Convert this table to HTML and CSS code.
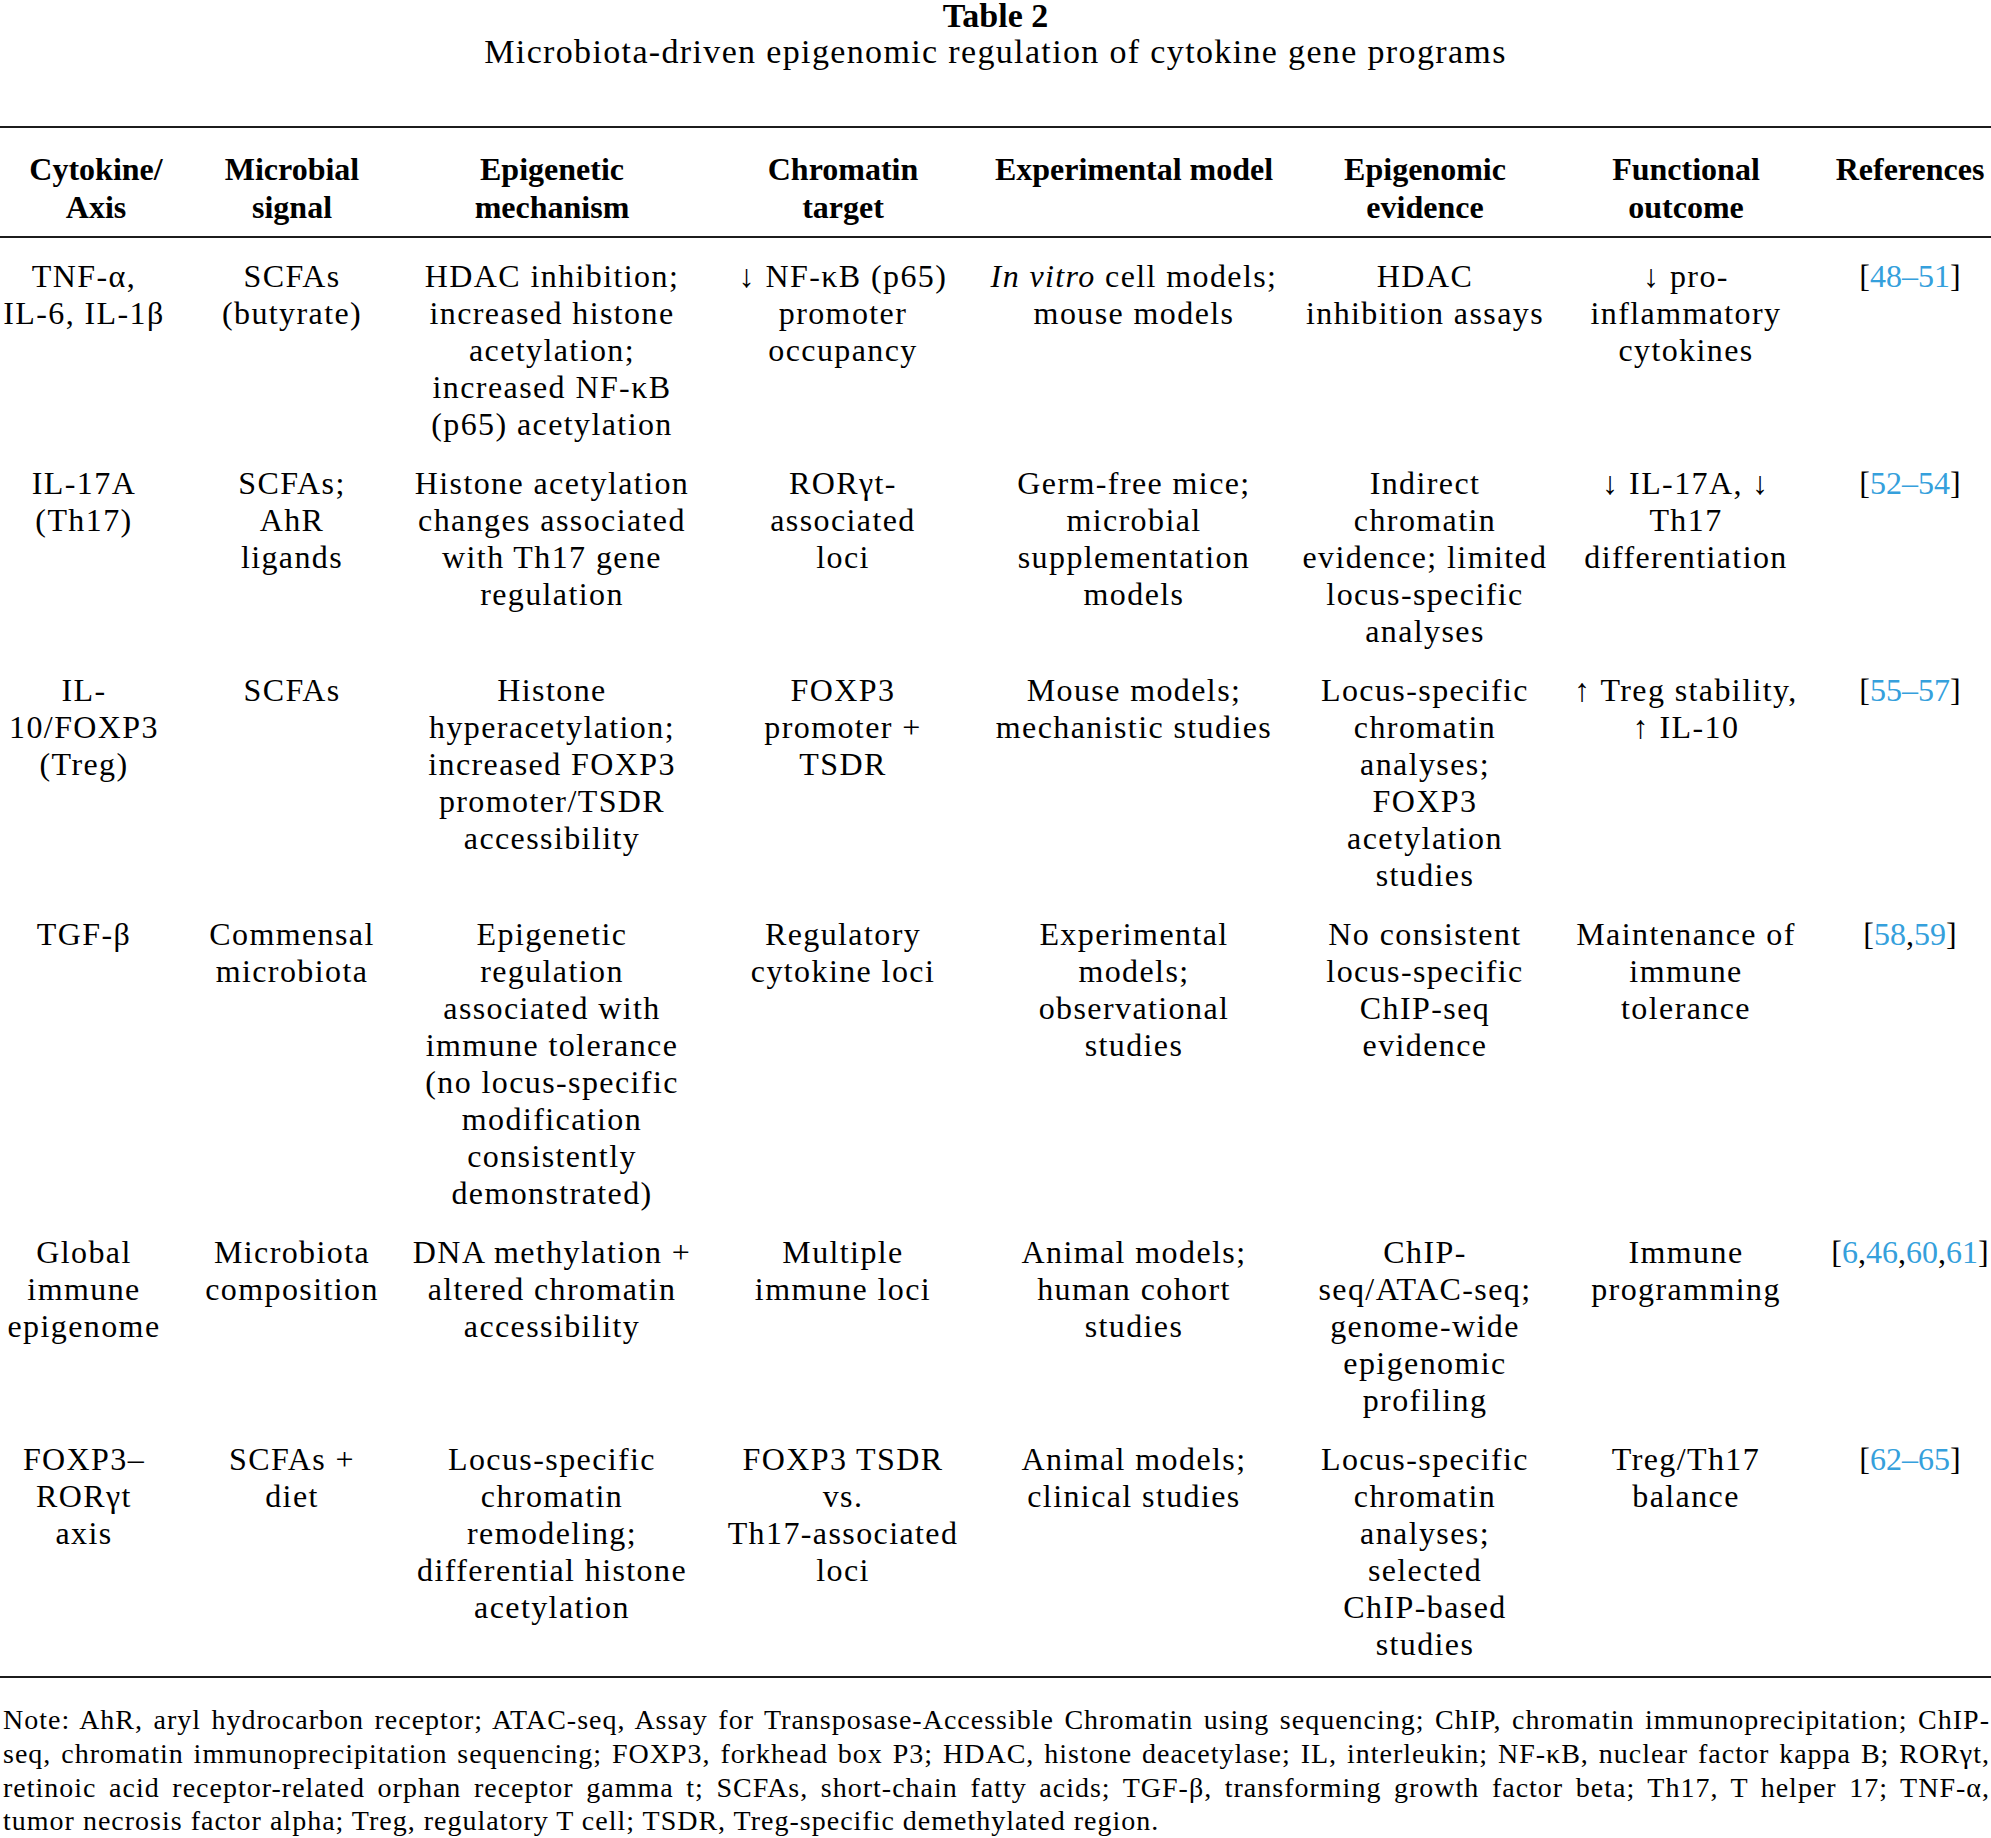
FILE: index.html
```html
<!DOCTYPE html>
<html lang="en">
<head>
<meta charset="utf-8">
<title>Table 2</title>
<link rel="stylesheet" href="styles.css">
</head>
<body>
<div class="caption">
  <div class="caption-label">Table 2</div>
  <div class="caption-title">Microbiota-driven epigenomic regulation of cytokine gene programs</div>
</div>
<table class="data-table">
  <colgroup>
    <col class="w1"><col class="w2"><col class="w3"><col class="w4"><col class="w5"><col class="w6"><col class="w7"><col class="w8">
  </colgroup>
  <thead>
    <tr>
      <th class="first">Cytokine/<br>Axis</th>
      <th>Microbial<br>signal</th>
      <th>Epigenetic<br>mechanism</th>
      <th>Chromatin<br>target</th>
      <th>Experimental model</th>
      <th>Epigenomic<br>evidence</th>
      <th>Functional<br>outcome</th>
      <th class="last">References</th>
    </tr>
  </thead>
  <tbody>
    <tr>
      <td class="first">TNF-α,<br>IL-6, IL-1β</td>
      <td>SCFAs<br>(butyrate)</td>
      <td>HDAC inhibition;<br>increased histone<br>acetylation;<br>increased NF-κB<br>(p65) acetylation</td>
      <td>↓ NF-κB (p65)<br>promoter<br>occupancy</td>
      <td><i>In vitro</i> cell models;<br>mouse models</td>
      <td>HDAC<br>inhibition assays</td>
      <td>↓ pro-<br>inflammatory<br>cytokines</td>
      <td class="last">[<a class="ref">48–51</a>]</td>
    </tr>
    <tr>
      <td class="first">IL-17A<br>(Th17)</td>
      <td>SCFAs;<br>AhR<br>ligands</td>
      <td>Histone acetylation<br>changes associated<br>with Th17 gene<br>regulation</td>
      <td>RORγt-<br>associated<br>loci</td>
      <td>Germ-free mice;<br>microbial<br>supplementation<br>models</td>
      <td>Indirect<br>chromatin<br>evidence; limited<br>locus-specific<br>analyses</td>
      <td>↓ IL-17A, ↓<br>Th17<br>differentiation</td>
      <td class="last">[<a class="ref">52–54</a>]</td>
    </tr>
    <tr>
      <td class="first">IL-<br>10/FOXP3<br>(Treg)</td>
      <td>SCFAs</td>
      <td>Histone<br>hyperacetylation;<br>increased FOXP3<br>promoter/TSDR<br>accessibility</td>
      <td>FOXP3<br>promoter +<br>TSDR</td>
      <td>Mouse models;<br>mechanistic studies</td>
      <td>Locus-specific<br>chromatin<br>analyses;<br>FOXP3<br>acetylation<br>studies</td>
      <td>↑ Treg stability,<br>↑ IL-10</td>
      <td class="last">[<a class="ref">55–57</a>]</td>
    </tr>
    <tr>
      <td class="first">TGF-β</td>
      <td>Commensal<br>microbiota</td>
      <td>Epigenetic<br>regulation<br>associated with<br>immune tolerance<br>(no locus-specific<br>modification<br>consistently<br>demonstrated)</td>
      <td>Regulatory<br>cytokine loci</td>
      <td>Experimental<br>models;<br>observational<br>studies</td>
      <td>No consistent<br>locus-specific<br>ChIP-seq<br>evidence</td>
      <td>Maintenance of<br>immune<br>tolerance</td>
      <td class="last">[<a class="ref">58</a>,<a class="ref">59</a>]</td>
    </tr>
    <tr>
      <td class="first">Global<br>immune<br>epigenome</td>
      <td>Microbiota<br>composition</td>
      <td>DNA methylation +<br>altered chromatin<br>accessibility</td>
      <td>Multiple<br>immune loci</td>
      <td>Animal models;<br>human cohort<br>studies</td>
      <td>ChIP-<br>seq/ATAC-seq;<br>genome-wide<br>epigenomic<br>profiling</td>
      <td>Immune<br>programming</td>
      <td class="last">[<a class="ref">6</a>,<a class="ref">46</a>,<a class="ref">60</a>,<a class="ref">61</a>]</td>
    </tr>
    <tr class="final">
      <td class="first">FOXP3–<br>RORγt<br>axis</td>
      <td>SCFAs +<br>diet</td>
      <td>Locus-specific<br>chromatin<br>remodeling;<br>differential histone<br>acetylation</td>
      <td>FOXP3 TSDR<br>vs.<br>Th17-associated<br>loci</td>
      <td>Animal models;<br>clinical studies</td>
      <td>Locus-specific<br>chromatin<br>analyses;<br>selected<br>ChIP-based<br>studies</td>
      <td>Treg/Th17<br>balance</td>
      <td class="last">[<a class="ref">62–65</a>]</td>
    </tr>
  </tbody>
</table>
<p class="note"><span class="note-line">Note: AhR, aryl hydrocarbon receptor; ATAC-seq, Assay for Transposase-Accessible Chromatin using sequencing; ChIP, chromatin immunoprecipitation; ChIP-</span><span class="note-line">seq, chromatin immunoprecipitation sequencing; FOXP3, forkhead box P3; HDAC, histone deacetylase; IL, interleukin; NF-κB, nuclear factor kappa B; RORγt,</span><span class="note-line">retinoic acid receptor-related orphan receptor gamma t; SCFAs, short-chain fatty acids; TGF-β, transforming growth factor beta; Th17, T helper 17; TNF-α,</span><span class="note-line note-end">tumor necrosis factor alpha; Treg, regulatory T cell; TSDR, Treg-specific demethylated region.</span></p>
</body>
</html>
```
FILE: styles.css
```css
html, body {
  margin: 0;
  padding: 0;
  background: #fff;
}

body {
  font-family: "Liberation Serif", "Times New Roman", serif;
  color: #000;
  width: 1991px;
  overflow: hidden;
}

.caption {
  text-align: center;
}

.caption-label {
  font-weight: bold;
  font-size: 34px;
  line-height: 32px;
}

.caption-title {
  font-size: 34px;
  line-height: 37px;
  letter-spacing: 1.35px;
  margin-top: 1px;
}

.data-table {
  width: 1991px;
  table-layout: fixed;
  border-collapse: separate;
  border-spacing: 0;
  margin-top: 56px;
}

.w1 { width: 178px; }
.w2 { width: 228px; }
.w3 { width: 292px; }
.w4 { width: 290px; }
.w5 { width: 292px; }
.w6 { width: 290px; }
.w7 { width: 232px; }
.w8 { width: 189px; }

.data-table th {
  font-weight: bold;
  font-size: 32px;
  line-height: 38px;
  text-align: center;
  vertical-align: top;
  white-space: nowrap;
  padding: 22px 0 10px;
  border-top: 2px solid #1c1c1c;
  border-bottom: 2px solid #1c1c1c;
}

.data-table th.first {
  padding-left: 14px;
}

.data-table th.last {
  padding-left: 27px;
}

.data-table td {
  font-size: 32px;
  line-height: 37px;
  letter-spacing: 1.4px;
  text-align: center;
  vertical-align: top;
  white-space: nowrap;
  padding: 11px 0;
}

.data-table tbody tr:first-child td {
  padding-top: 20px;
}

.data-table tr.final td {
  padding-bottom: 13px;
  border-bottom: 2px solid #1c1c1c;
}

.data-table td.first {
  padding-right: 10px;
}

.data-table td.last {
  padding-left: 27px;
  letter-spacing: 0;
}

.ref {
  color: #35a0dc;
  text-decoration: none;
}

.note {
  margin: 25px 1px 0 3px;
  font-size: 28px;
  line-height: 33.8px;
  letter-spacing: 1px;
}

.note-line {
  display: block;
  white-space: nowrap;
  text-align: justify;
  text-align-last: justify;
}

.note-line.note-end {
  text-align-last: auto;
}
```
